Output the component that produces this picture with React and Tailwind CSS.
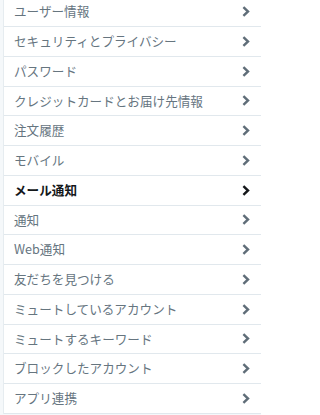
import React from "react";

const items = [
  "ユーザー情報",
  "セキュリティとプライバシー",
  "パスワード",
  "クレジットカードとお届け先情報",
  "注文履歴",
  "モバイル",
  "メール通知",
  "通知",
  "Web通知",
  "友だちを見つける",
  "ミュートしているアカウント",
  "ミュートするキーワード",
  "ブロックしたアカウント",
  "アプリ連携",
];

const Chevron = ({ active }) => (
  <svg width="8" height="11" viewBox="0 0 8 11" className={active ? "text-[#14171a]" : "text-[#5f6d78]"}>
    <path d="M1.4 1.2 L6 5.5 L1.4 9.8" fill="none" stroke="currentColor" strokeWidth="2.4" />
  </svg>
);

export default function App() {
  return (
    <div className="w-[261px] h-[415px] overflow-hidden bg-[#f5f8fa] pl-[3px]">
      <ul className="-mt-[2.75px] bg-white border-l border-[#e6ecf0]">
        {items.map((label) => {
          const active = label === "メール通知";
          return (
            <li
              key={label}
              className="h-[29.75px] flex items-center justify-between pl-[10px] pr-[11px] border-b border-[#e1e8ed]"
            >
              <span
                className={`text-[12.6px] leading-none font-['Noto_Sans_CJK_JP',sans-serif] ${
                  active ? "font-bold text-[#14171a]" : "text-[#66757f]"
                }`}
              >
                {label}
              </span>
              <Chevron active={active} />
            </li>
          );
        })}
      </ul>
    </div>
  );
}
